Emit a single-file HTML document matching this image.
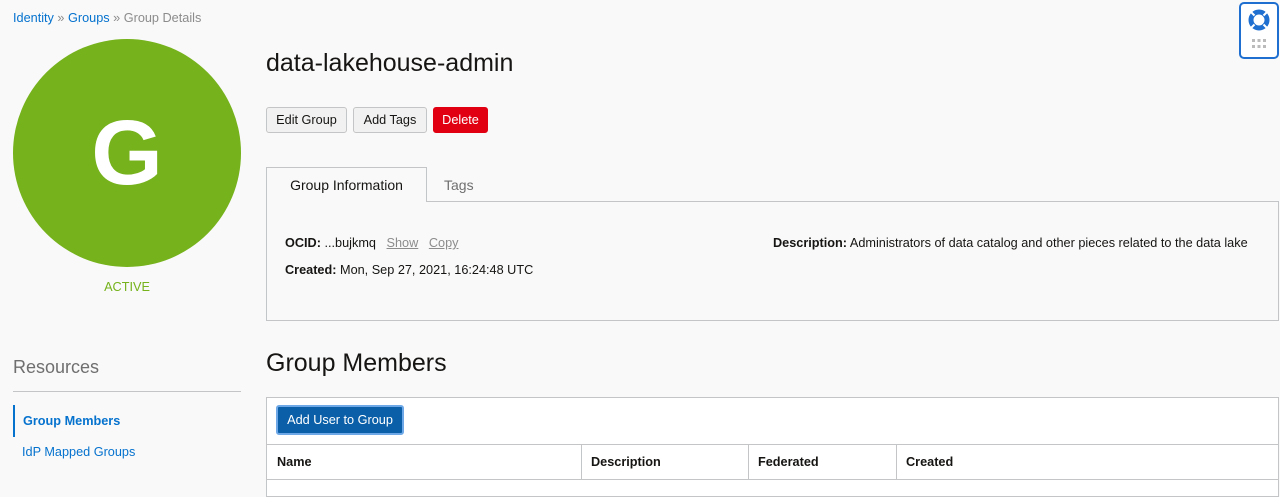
<!DOCTYPE html>
<html><head><style>
*{box-sizing:border-box;margin:0;padding:0}
body{width:1280px;height:488px;background:#f9f9f9;font-family:"Liberation Sans",sans-serif;color:#161513;position:relative;overflow:hidden;font-size:12.7px}
.a{position:absolute}
a{color:#0572ce;text-decoration:none}
.btn{position:absolute;top:107px;height:26px;border:1px solid #c4c5c6;border-radius:3px;background:#f1f1f1;font-size:12.7px;line-height:24px;text-align:center;color:#161513}
</style></head><body>
<div class="a" style="left:13px;top:11px;color:#8c8c8c"><a>Identity</a> » <a>Groups</a> » Group Details</div>
<div class="a" style="left:13px;top:39px;width:228px;height:228px;border-radius:50%;background:#75b21b;color:#fff;font-size:92px;font-weight:bold;text-align:center;line-height:228px">G</div>
<div class="a" style="left:13px;top:280px;width:228px;text-align:center;color:#75b21b">ACTIVE</div>
<div class="a" style="left:13px;top:357px;font-size:18px;color:#6f6f6f">Resources</div>
<div class="a" style="left:13px;top:391px;width:228px;border-top:1px solid #c4c5c6"></div>
<div class="a" style="left:13px;top:405px;height:32px;border-left:2px solid #0572ce;padding-left:8px;line-height:32px;font-weight:bold;color:#0572ce">Group Members</div>
<div class="a" style="left:22px;top:445px;color:#0572ce">IdP Mapped Groups</div>
<div class="a" style="left:266px;top:49px;font-size:25px">data-lakehouse-admin</div>
<div class="btn" style="left:266px;width:81px">Edit Group</div>
<div class="btn" style="left:353px;width:74px">Add Tags</div>
<div class="btn" style="left:433px;width:55px;background:#e00012;border-color:#e00012;color:#fff">Delete</div>
<div class="a" style="left:266px;top:201px;width:1013px;height:120px;border:1px solid #c4c5c6;background:#f9f9f9"></div>
<div class="a" style="left:266px;top:167px;width:161px;height:35px;border:1px solid #c4c5c6;border-bottom:none;background:#f9f9f9;font-size:14px;line-height:35px;text-align:center">Group Information</div>
<div class="a" style="left:444px;top:177px;font-size:14px;color:#6f6f6f">Tags</div>
<div class="a" style="left:285px;top:236px"><b>OCID:</b> ...bujkmq &nbsp; <u style="color:#8c8c8c">Show</u> &nbsp; <u style="color:#8c8c8c">Copy</u></div>
<div class="a" style="left:285px;top:263px"><b>Created:</b> Mon, Sep 27, 2021, 16:24:48 UTC</div>
<div class="a" style="left:773px;top:236px"><b>Description:</b> Administrators of data catalog and other pieces related to the data lake</div>
<div class="a" style="left:266px;top:349px;font-size:25px">Group Members</div>
<div class="a" style="left:266px;top:397px;width:1013px;height:100px;border:1px solid #c4c5c6;background:#fff"></div>
<div class="a" style="left:276px;top:405px;width:128px;height:30px;border:2px solid #6fa8e6;border-radius:3px;background:#0a5fa8;color:#fff;line-height:26px;text-align:center">Add User to Group</div>
<div class="a" style="left:267px;top:444px;width:1011px;height:36px;border-top:1px solid #c4c5c6;border-bottom:1px solid #c4c5c6;font-weight:bold">
<div class="a" style="left:10px;top:10px">Name</div>
<div class="a" style="left:314px;top:0;height:35px;border-left:1px solid #c4c5c6"></div>
<div class="a" style="left:324px;top:10px">Description</div>
<div class="a" style="left:481px;top:0;height:35px;border-left:1px solid #c4c5c6"></div>
<div class="a" style="left:491px;top:10px">Federated</div>
<div class="a" style="left:629px;top:0;height:35px;border-left:1px solid #c4c5c6"></div>
<div class="a" style="left:639px;top:10px">Created</div>
</div>
<div class="a" style="left:1239px;top:2px;width:40px;height:57px;border:2px solid #1e6fd0;border-radius:5px;background:#fff">
<svg width="36" height="53" viewBox="0 0 36 53"><circle cx="18" cy="16" r="8" fill="none" stroke="#1e6fd0" stroke-width="5"/><g stroke="#fff" stroke-width="2"><line x1="10" y1="8" x2="13.5" y2="11.5"/><line x1="26" y1="8" x2="22.5" y2="11.5"/><line x1="10" y1="24" x2="13.5" y2="20.5"/><line x1="26" y1="24" x2="22.5" y2="20.5"/></g><g fill="#bbb"><rect x="11" y="35" width="3" height="3"/><rect x="16.5" y="35" width="3" height="3"/><rect x="22" y="35" width="3" height="3"/><rect x="11" y="41" width="3" height="3"/><rect x="16.5" y="41" width="3" height="3"/><rect x="22" y="41" width="3" height="3"/></g></svg>
</div>
</body></html>
